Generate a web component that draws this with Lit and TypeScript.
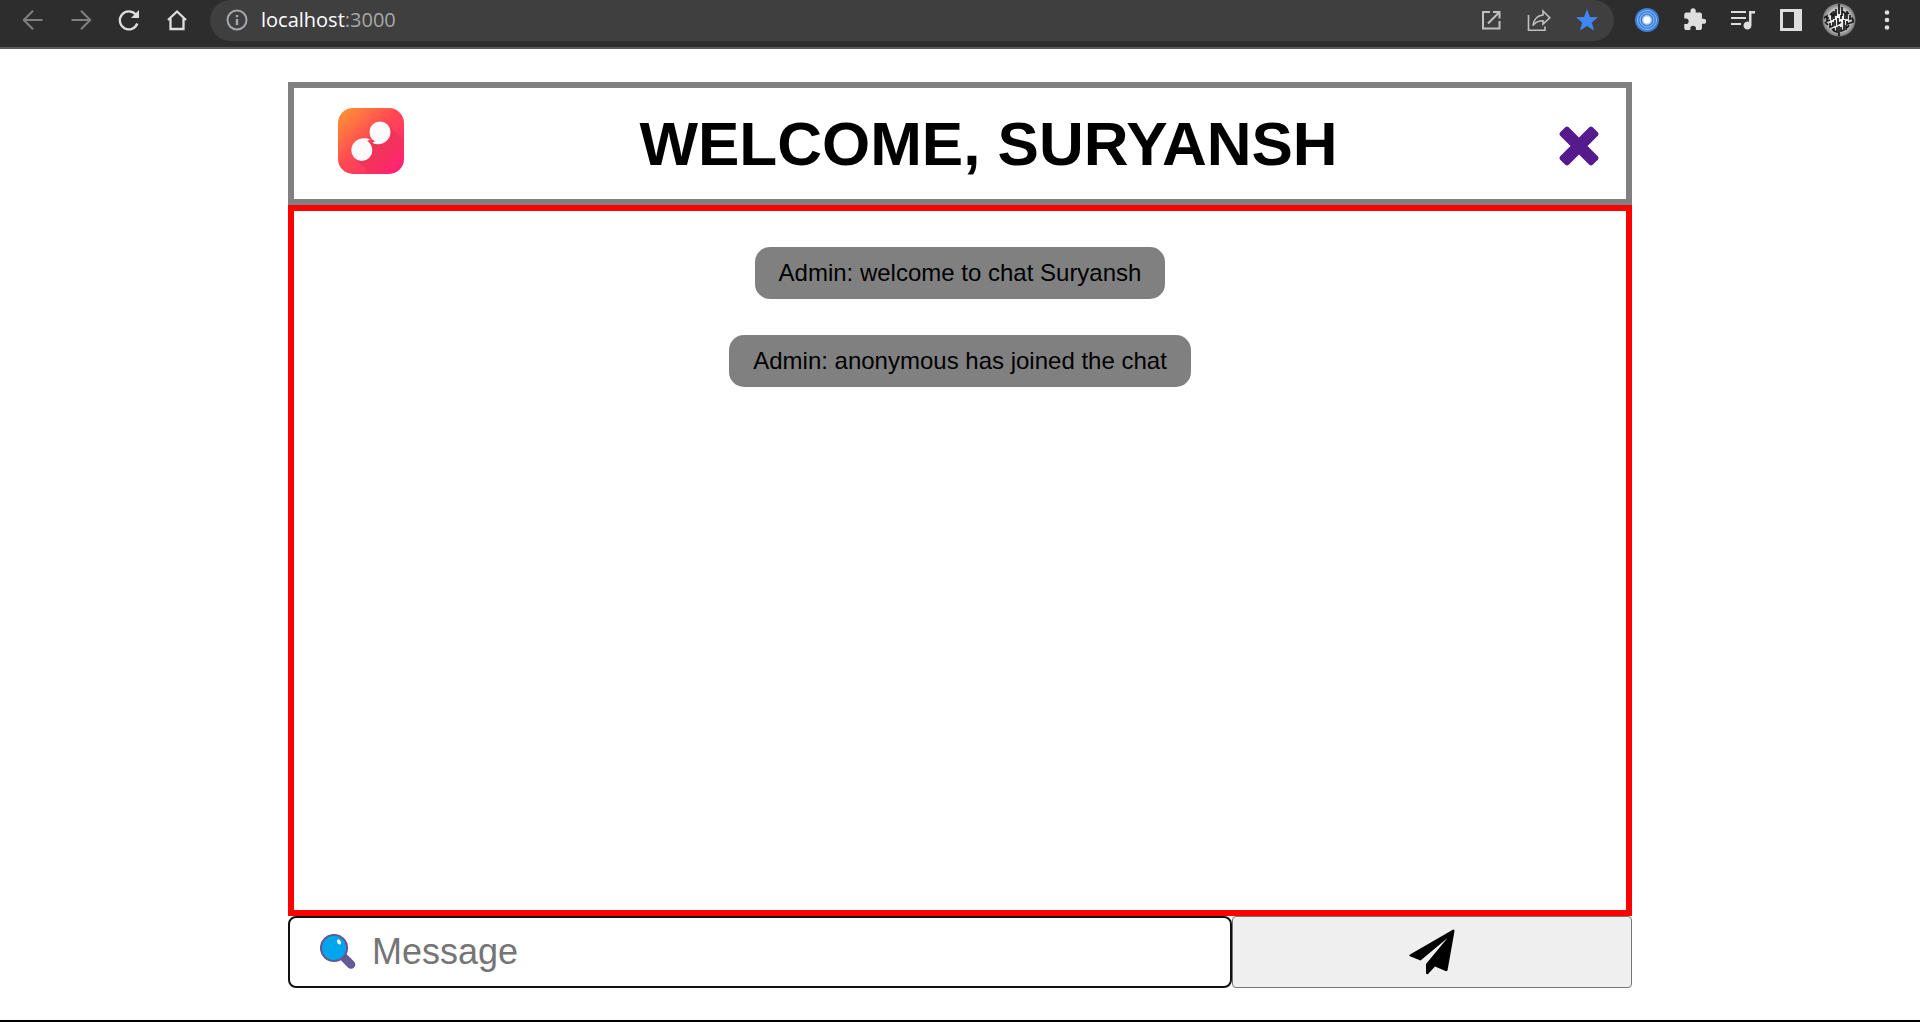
import { LitElement, html, css, svg, TemplateResult } from "lit";
import { customElement, state } from "lit/decorators.js";

interface ToolbarItem {
  label: string;
  icon: TemplateResult;
  dim?: boolean;
}

const back: ToolbarItem = {
  label: "Back",
  dim: true,
  icon: svg`<path d="M21.500 12H3M12 2.800L2.800 12L12 21.200" fill="none" stroke="currentColor" stroke-width="2"/>`,
};
const forward: ToolbarItem = {
  label: "Forward",
  dim: true,
  icon: svg`<path d="M2.500 12H21M12 2.800L21.200 12L12 21.200" fill="none" stroke="currentColor" stroke-width="2"/>`,
};
const reload: ToolbarItem = {
  label: "Reload",
  icon: svg`<path d="M20.300 15.500A9 9 0 1 1 18.500 6.300" fill="none" stroke="currentColor" stroke-width="2.300"/><path d="M22 2V10H14Z" fill="currentColor"/>`,
};
const home: ToolbarItem = {
  label: "Home",
  icon: svg`<path d="M3 12L12 3.500L21 12M5.500 10.500V21H18.500V10.500" fill="none" stroke="currentColor" stroke-width="2.300"/>`,
};
const openWindow: ToolbarItem = {
  label: "Open in window",
  icon: svg`<path d="M11 4H4V20.500H20.500V13M14 4H20.500V10.500M20 4.500L9 15.500" fill="none" stroke="currentColor" stroke-width="2"/>`,
};
const share: ToolbarItem = {
  label: "Share",
  icon: svg`<path d="M1.500 7V22.300H18V18.500M16 3L22.800 9.800L16 16.200V12.800C11.500 12.800 8.500 14 6 17.500C6.800 11.500 10.500 7.500 16 7Z" fill="none" stroke="currentColor" stroke-width="1.600"/>`,
};
const bookmark: ToolbarItem = {
  label: "Bookmark",
  icon: svg`<path d="M12 1.200L15 9L23 9.300L16.800 14.400L19 22.400L12 18L5 22.400L7.200 14.400L1 9.300L9 9Z" fill="#4285f4"/>`,
};
const target: ToolbarItem = {
  label: "Extension",
  icon: svg`<circle cx="12" cy="12" r="12" fill="#3a80dc"/><circle cx="12" cy="12" r="9.500" fill="none" stroke="#9cc2f2" stroke-width=".9"/><circle cx="12" cy="12" r="7" fill="none" stroke="#9cc2f2"/><circle cx="12" cy="12" r="5" fill="#a9cbf5"/><circle cx="12" cy="12" r="3.500" fill="#fff"/>`,
};
const puzzle: ToolbarItem = {
  label: "Extensions",
  icon: svg`<path d="M20.500 11H19V7c0-1.100-.9-2-2-2h-4V3.500a2.500 2.500 0 0 0-5 0V5H4c-1.100 0-2 .9-2 2v3.800h1.500a2.700 2.700 0 0 1 0 5.400H2V20c0 1.100.9 2 2 2h3.800v-1.500a2.700 2.700 0 0 1 5.400 0V22H17c1.100 0 2-.9 2-2v-4h1.500a2.500 2.500 0 0 0 0-5z" transform="translate(-.8 -.8) scale(1.040)" fill="currentColor"/>`,
};
const media: ToolbarItem = {
  label: "Media controls",
  icon: svg`<path d="M0 4H15M0 10H15M0 16H10" fill="none" stroke="currentColor" stroke-width="2.200"/><path d="M18 3H24V5.500H20.500V17.500A4 4 0 1 1 18 13.800Z" fill="currentColor"/>`,
};
const panel: ToolbarItem = {
  label: "Side panel",
  icon: svg`<path d="M1 1H23V23H1ZM4 4V20H15V4Z" fill="currentColor" fill-rule="evenodd"/>`,
};
const menu: ToolbarItem = {
  label: "Menu",
  icon: svg`<circle cx="12" cy="4.500" r="2.300" fill="currentColor"/><circle cx="12" cy="12" r="2.300" fill="currentColor"/><circle cx="12" cy="19.500" r="2.300" fill="currentColor"/>`,
};

@customElement("browser-bar")
export class BrowserBar extends LitElement {
  static styles = css`
    :host {
      display: flex;
      gap: 9px;
      padding: 0 9px 6px;
      background: #2d2d2d;
      border-bottom: 2px solid #5c5a5c;
      color: #dedede;
    }
    .group {
      display: flex;
    }
    .cell {
      display: flex;
      align-items: center;
      justify-content: center;
      width: 48px;
      height: 40px;
      padding: 0;
      border: 0;
      background: none;
      color: inherit;
    }
    .dim {
      color: #808080;
    }
    .icon {
      width: 24px;
      height: 24px;
    }
    .avatar {
      width: 34px;
      height: 34px;
    }
    .address {
      flex: 1;
      display: flex;
      padding: 0 3px 1px;
      border-radius: 21px;
      background: #3f3f3f;
      color: #c0c0c0;
    }
    .url {
      flex: 1;
      color: #a8a8a8;
      font: 20px/40px "Open Sans", "Noto Sans", sans-serif;
      text-decoration: none;
    }
    .host {
      color: #fff;
    }
  `;

  private cell(item: ToolbarItem) {
    return html`<button class="cell ${item.dim ? "dim" : ""}" aria-label=${item.label}>
      <svg class="icon" viewBox="0 0 24 24">${item.icon}</svg>
    </button>`;
  }

  render() {
    return html`
      <div class="group">${[back, forward, reload, home].map((i) => this.cell(i))}</div>
      <div class="address">
        <button class="cell" aria-label="Site information">
          <svg class="icon" viewBox="0 0 24 24">
            <circle cx="12" cy="12" r="9.500" fill="none" stroke="#a4a8ad" stroke-width="2" />
            <path d="M12 7V9.200M12 11V17" stroke="#a4a8ad" stroke-width="2.400" />
          </svg>
        </button>
        <a class="url" href="http://localhost:3000"><span class="host">localhost</span>:3000</a>
        ${[openWindow, share, bookmark].map((i) => this.cell(i))}
      </div>
      <div class="group">
        ${[target, puzzle, media, panel].map((i) => this.cell(i))}
        <button class="cell" aria-label="Profile">
          <svg class="avatar" viewBox="0 0 34 34">
            <defs>
              <radialGradient id="disc">
                <stop offset="0" stop-color="#fff" />
                <stop offset="0.600" stop-color="#dcdcdc" />
                <stop offset="1" stop-color="#747474" />
              </radialGradient>
            </defs>
            <circle cx="17" cy="17" r="16.500" fill="url(#disc)" />
            <path
              d="M17 1V11M17 23V33M2 15l3-2v5l3-1M3 19l3 3M8 12l2-2v7M12 8v8M10 13l4-3M14 6v7M20 4v9M20 8l3 2v6M25 8v8M23 12l4-2M28 12v4l3-1M31 16v3l-3 1M8 20v4l3-1v-4M13 17v6M16 15v6l3-2M19 12v4M22 17v6M25 18v3l3-1M12 25v3l3 1v-5M19 24v4l3-1v-4M24 22v5M5 15h2M10 26l2 2M27 22l-2 3"
              fill="none" stroke="#181818" stroke-width="1.700" />
          </svg>
        </button>
        ${this.cell(menu)}
      </div>
    `;
  }
}

@customElement("chat-room")
export class ChatRoom extends LitElement {
  static styles = css`
    :host {
      flex: 1;
      display: flex;
      flex-direction: column;
      width: 70%;
      margin: 33px auto 32px;
      font-family: "Liberation Sans", Arial, sans-serif;
    }
    .header {
      display: flex;
      align-items: center;
      padding: 19px 27px 19px 44px;
      border: 6px solid #808080;
    }
    .logo {
      width: 66px;
      height: 66px;
      margin: 0 14px 5px 0;
    }
    .title {
      flex: 1;
      margin: 0;
      font-size: 62px;
      line-height: 73px;
      text-align: center;
    }
    .close {
      display: flex;
      padding-top: 4px;
      color: #551a8b;
    }
    .cross {
      width: 40px;
      height: 40px;
    }
    .messages {
      flex: 1;
      display: flex;
      flex-direction: column;
      align-items: center;
      gap: 36px;
      padding: 36px;
      border: 6px solid #f00;
    }
    .message {
      padding: 12px 24px;
      border-radius: 15px;
      background: #808080;
      font-size: 24px;
      line-height: 28px;
    }
    .composer {
      display: grid;
      grid-template-columns: 59fr 25fr;
      grid-template-rows: 72px;
    }
    .field {
      display: flex;
      align-items: center;
      gap: 16px;
      min-width: 0;
      box-sizing: border-box;
      padding: 0 30px;
      border: 2px solid #101010;
      border-radius: 8px;
    }
    .lens {
      flex: none;
      width: 36px;
      height: 36px;
    }
    .input {
      flex: 1;
      min-width: 0;
      padding: 0;
      border: 0;
      outline: 0;
      background: none;
      font: 36px/42px "Liberation Sans", Arial, sans-serif;
    }
    .input::placeholder {
      color: #757575;
    }
    .send {
      display: flex;
      align-items: center;
      justify-content: center;
      padding: 0;
      border: 1px solid #767676;
      border-radius: 4px;
      background: #efefef;
    }
    .plane {
      width: 46px;
      height: 46px;
    }
  `;

  @state() private messages = [
    "Admin: welcome to chat Suryansh",
    "Admin: anonymous has joined the chat",
  ];

  render() {
    return html`
      <header class="header">
        <svg class="logo" viewBox="0 0 66 66" role="img" aria-label="Chat logo">
          <defs>
            <linearGradient id="warm" x1="0" y1="0" x2="1" y2="1">
              <stop offset="0" stop-color="#ff9a2f" />
              <stop offset="0.450" stop-color="#ff4b52" />
              <stop offset="1" stop-color="#ff1a78" />
            </linearGradient>
            <linearGradient id="shade" x1="0.200" y1="0.200" x2="0.850" y2="0.850">
              <stop offset="0" stop-color="#d8284e" stop-opacity="0.700" />
              <stop offset="1" stop-color="#d8284e" stop-opacity="0" />
            </linearGradient>
            <clipPath id="tile"><rect width="66" height="66" rx="15" /></clipPath>
          </defs>
          <g clip-path="url(#tile)">
            <rect width="66" height="66" fill="url(#warm)" />
            <path d="M50 17L66 32V66H32L16 49L30 36Z" fill="url(#shade)" />
          </g>
          <path d="M42 13.500A10.500 10.500 0 0 1 52.500 24C52.500 31.500 46 36.500 39.500 36.300Q36 36 34 34.500L37.200 33.500A11 11 0 0 1 31.500 24A10.500 10.500 0 0 1 42 13.500Z" fill="#fffafb" />
          <path d="M23.500 53A10.500 10.500 0 0 1 13.300 42.500C13.300 34.500 20 30 26.500 30.200Q30 30.300 32 31.500L29.200 33A11 11 0 0 1 34.200 42.500A10.500 10.500 0 0 1 23.500 53Z" fill="#fffafb" />
        </svg>
        <h1 class="title">WELCOME, SURYANSH</h1>
        <a class="close" href="/" aria-label="Leave chat">
          <svg class="cross" viewBox="0 0 40 40">
            <path
              d="M6.300 1.200Q8 -.2 9.700 1.200L20 11.500L30.300 1.200Q32 -.2 33.700 1.200L38.800 6.300Q40.200 8 38.800 9.700L28.500 20L38.800 30.300Q40.200 32 38.800 33.700L33.700 38.800Q32 40.200 30.300 38.800L20 28.500L9.700 38.800Q8 40.200 6.300 38.800L1.200 33.700Q-.2 32 1.200 30.300L11.500 20L1.200 9.700Q-.2 8 1.200 6.300Z"
              fill="currentColor" />
          </svg>
        </a>
      </header>
      <section class="messages">
        ${this.messages.map((m) => html`<div class="message">${m}</div>`)}
      </section>
      <form class="composer" @submit=${(e: Event) => e.preventDefault()}>
        <label class="field">
          <svg class="lens" viewBox="0 0 36 36" aria-hidden="true">
            <path d="M24.500 24L31 30.500" stroke="#635994" stroke-width="8.500" stroke-linecap="round" />
            <circle cx="14" cy="14" r="13" fill="#00a6ed" stroke="#635994" stroke-width="2.200" />
            <ellipse cx="19" cy="8" rx="1.800" ry="2.600" transform="rotate(-35 19 8)" fill="#fff" />
          </svg>
          <input class="input" type="text" placeholder="Message" aria-label="Message" />
        </label>
        <button class="send" type="submit" aria-label="Send">
          <svg class="plane" viewBox="0 0 46 46">
            <path d="M45.300 1Q44.800 .3 43.800 .8L1 25.500Q-.3 26.500 1 27.300L11.500 31.500L38.500 9L17 35V44Q17.300 45.700 19 45L26 37.500L36.500 42Q38.300 42.500 38.600 41L45.500 2Z" fill="#000" />
          </svg>
        </button>
      </form>
    `;
  }
}

@customElement("app-root")
export class AppRoot extends LitElement {
  static styles = css`
    :host {
      display: flex;
      flex-direction: column;
      min-height: 100vh;
      box-sizing: border-box;
      border-bottom: 2px solid #000;
      background: #fff;
      color: #000;
    }
  `;

  render() {
    return html`<browser-bar></browser-bar><chat-room></chat-room>`;
  }
}
